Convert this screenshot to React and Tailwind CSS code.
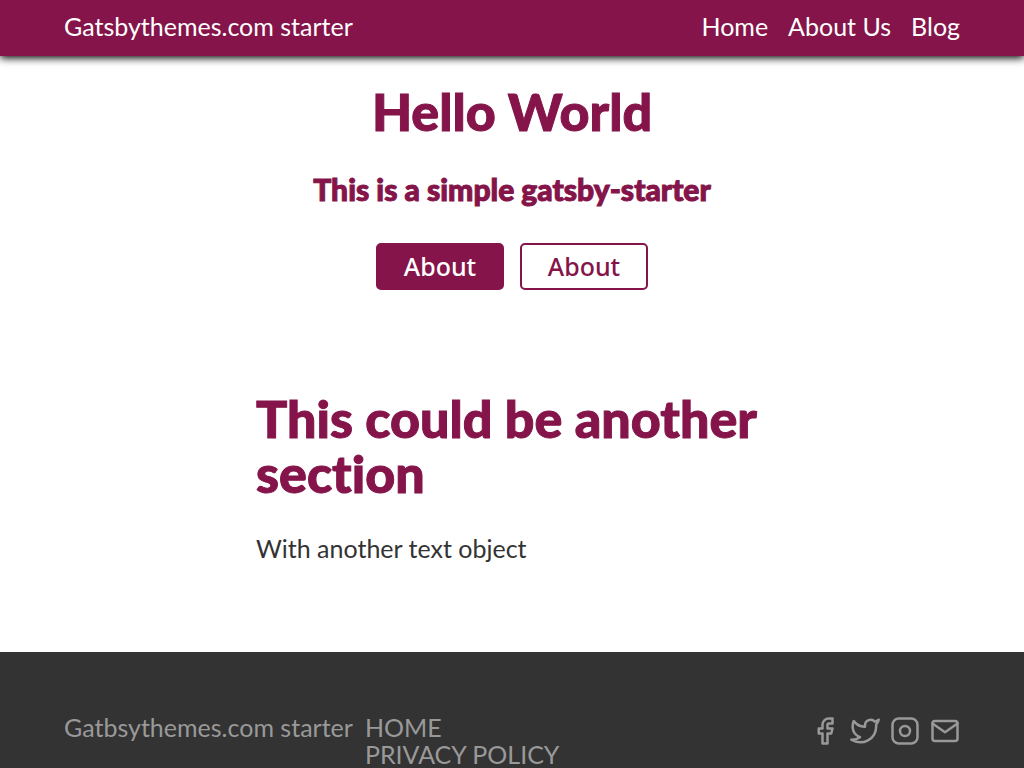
import { FiFacebook, FiMail, FiTwitter } from "react-icons/fi";

function InstagramIcon() {
  return (
    <svg viewBox="0 0 24 24" className="size-[30px]" fill="none" stroke="currentColor" strokeWidth="2" strokeLinecap="round" strokeLinejoin="round" aria-hidden="true">
      <rect x="2" y="2" width="20" height="20" rx="5" />
      <circle cx="12" cy="12" r="4" />
    </svg>
  );
}

const socials = [
  { name: "Facebook", icon: <FiFacebook size={30} /> },
  { name: "Twitter", icon: <FiTwitter size={30} /> },
  { name: "Instagram", icon: <InstagramIcon /> },
  { name: "Email", icon: <FiMail size={30} /> },
];

export default function App() {
  return (
    <div className="flex min-h-screen flex-col bg-white font-['Lato',sans-serif] text-[25px] leading-[27px] text-[#333333] [font-variant-ligatures:none]">
      <header className="relative flex items-center justify-between bg-[#841449] px-16 pt-3 pb-4 leading-7 text-white shadow-[0_2px_8px_#000000]">
        <a href="#home">Gatsbythemes.com starter</a>
        <nav className="flex gap-5">
          <a href="#home">Home</a>
          <a href="#about">About Us</a>
          <a href="#blog">Blog</a>
        </nav>
      </header>
      <main className="grow">
        <section className="flex flex-col items-center px-16 pt-7 text-center font-black text-[#841449]">
          <h1 className="text-[52px] leading-[54px] [-webkit-text-stroke:1px]">Hello World</h1>
          <h2 className="mt-[35px] text-[30px] leading-8 [-webkit-text-stroke:1px]">This is a simple gatsby-starter</h2>
          <div className="mt-[38px] flex gap-4 font-['Noto_Sans',sans-serif] text-[25px] font-medium">
            <button type="button" className="h-[47px] w-32 rounded-[5px] border-2 border-[#841449] bg-[#841449] text-white">About</button>
            <button type="button" className="h-[47px] w-32 rounded-[5px] border-2 border-[#841449] bg-white">About</button>
          </div>
        </section>
        <section className="mx-auto w-1/2 pt-[101px] pb-[90px]">
          <h2 className="text-[52px] leading-[55px] font-black text-[#841449] [-webkit-text-stroke:1px]">This could be another section</h2>
          <p className="mt-[34px]">With another text object</p>
        </section>
      </main>
      <footer className="flex items-start justify-between bg-[#333333] px-16 pt-[62px] text-[#999999]">
        <div className="flex gap-3">
          <p>Gatbsythemes.com starter</p>
          <nav className="flex flex-col uppercase">
            <a href="#home">Home</a>
            <a href="#privacy">Privacy Policy</a>
          </nav>
        </div>
        <div className="flex gap-[10px] pt-[2px]">
          {socials.map((item) => (
            <a key={item.name} href={"#" + item.name.toLowerCase()} aria-label={item.name}>
              {item.icon}
            </a>
          ))}
        </div>
      </footer>
    </div>
  );
}
